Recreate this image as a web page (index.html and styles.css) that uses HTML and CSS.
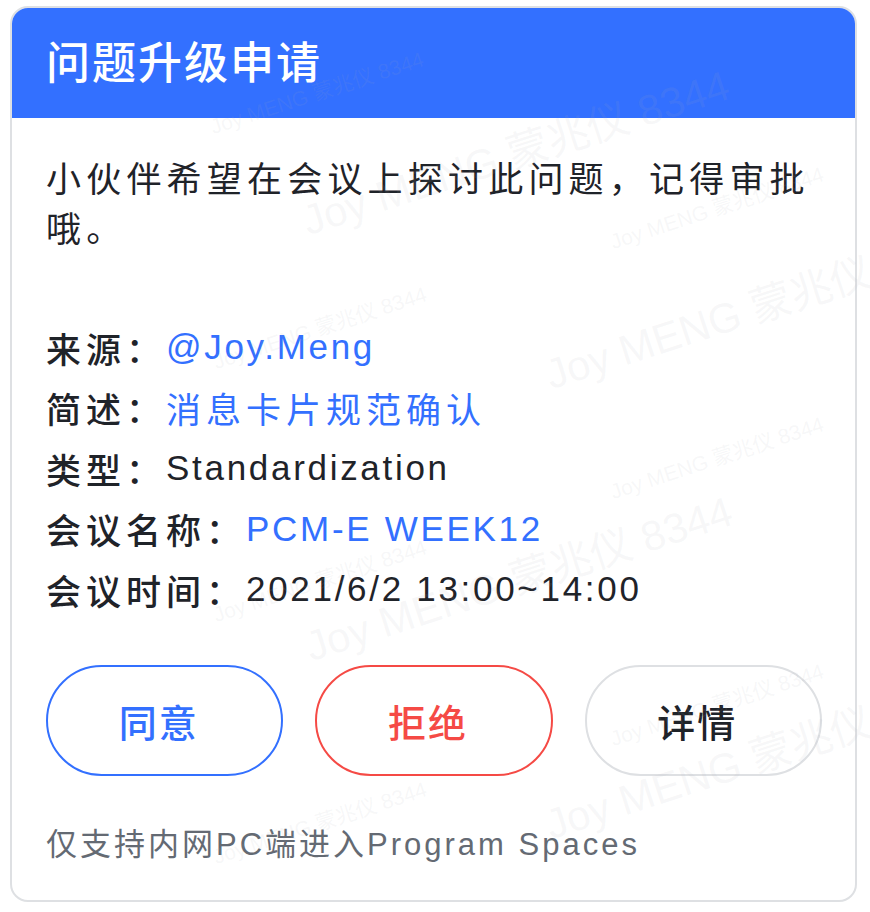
FILE: index.html
```html
<!DOCTYPE html>
<html lang="zh-CN">
<head>
<meta charset="utf-8">
<title>问题升级申请</title>
<link rel="stylesheet" href="styles.css">
</head>
<body>
<div class="card">
  <div class="header">
    <h1 class="title">问题升级申请</h1>
  </div>
  <div class="content">
    <p class="desc">小伙伴希望在会议上探讨此问题，记得审批哦。</p>
    <ul class="fields">
      <li class="field"><span class="label">来源：</span><span class="value link latin">@Joy.Meng</span></li>
      <li class="field"><span class="label">简述：</span><span class="value link">消息卡片规范确认</span></li>
      <li class="field"><span class="label">类型：</span><span class="value latin">Standardization</span></li>
      <li class="field"><span class="label">会议名称：</span><span class="value link latin">PCM-E WEEK12</span></li>
      <li class="field"><span class="label">会议时间：</span><span class="value latin">2021/6/2 13:00~14:00</span></li>
    </ul>
    <div class="actions">
      <button class="btn btn-agree">同意</button>
      <button class="btn btn-reject">拒绝</button>
      <button class="btn btn-detail">详情</button>
    </div>
    <p class="note">仅支持内网PC端进入Program Spaces</p>
  </div>
</div>
<div class="watermark">
  <span class="wm wm-big" style="left:312px;top:186px">Joy MENG 蒙兆仪 8344</span>
  <span class="wm wm-big" style="left:555px;top:340px">Joy MENG 蒙兆仪 8344</span>
  <span class="wm wm-big" style="left:315px;top:612px">Joy MENG 蒙兆仪 8344</span>
  <span class="wm wm-big" style="left:555px;top:790px">Joy MENG 蒙兆仪 8344</span>
  <span class="wm wm-small" style="left:215px;top:110px">Joy MENG 蒙兆仪 8344</span>
  <span class="wm wm-small" style="left:218px;top:345px">Joy MENG 蒙兆仪 8344</span>
  <span class="wm wm-small" style="left:218px;top:598px">Joy MENG 蒙兆仪 8344</span>
  <span class="wm wm-small" style="left:218px;top:840px">Joy MENG 蒙兆仪 8344</span>
  <span class="wm wm-small" style="left:615px;top:225px">Joy MENG 蒙兆仪 8344</span>
  <span class="wm wm-small" style="left:615px;top:475px">Joy MENG 蒙兆仪 8344</span>
  <span class="wm wm-small" style="left:615px;top:722px">Joy MENG 蒙兆仪 8344</span>
</div>
</body>
</html>
```

FILE: styles.css
```css
* {
  box-sizing: border-box;
}

html, body {
  margin: 0;
  padding: 0;
  background: #ffffff;
}

body {
  position: relative;
  width: 870px;
  height: 912px;
  overflow: hidden;
  font-family: "Liberation Sans", "Noto Sans CJK SC", sans-serif;
  color: #1f2329;
}

.card {
  margin: 6px 0 0 10px;
  width: 847px;
  border: 2px solid #dee0e3;
  border-radius: 18px;
  overflow: hidden;
  background: #ffffff;
}

.header {
  height: 110px;
  background: #3370ff;
  display: flex;
  align-items: center;
  padding: 0 34px 6px;
}

.title {
  margin: 0;
  font-family: "Noto Sans CJK SC", sans-serif;
  font-size: 44px;
  font-weight: 500;
  letter-spacing: 2px;
  color: #ffffff;
  line-height: 1;
}

.content {
  padding: 34px 33px 30px 34px;
}

.desc {
  margin: 0;
  font-family: "Noto Sans CJK SC", sans-serif;
  font-size: 35px;
  line-height: 50px;
  letter-spacing: 5.2px;
  color: #1f2329;
}

.fields {
  list-style: none;
  margin: 65px 0 0;
  padding: 0;
}

.field {
  display: flex;
  align-items: center;
  height: 60.5px;
  font-size: 35px;
  white-space: nowrap;
}

.label {
  font-family: "Noto Sans CJK SC", sans-serif;
  letter-spacing: 5px;
  color: #1f2329;
  font-weight: 500;
}

.value {
  font-family: "Noto Sans CJK SC", sans-serif;
  letter-spacing: 5px;
  color: #1f2329;
}

.value.latin {
  font-family: "Liberation Sans", "Noto Sans CJK SC", sans-serif;
  letter-spacing: 2.7px;
}

.value.link {
  color: #3370ff;
}

.actions {
  display: flex;
  gap: 32px;
  margin-top: 45px;
}

.btn {
  flex: 1;
  height: 111px;
  border-radius: 56px;
  border: 2px solid #dee0e3;
  background: #ffffff;
  font-family: "Noto Sans CJK SC", sans-serif;
  font-size: 38px;
  font-weight: 500;
  letter-spacing: 2px;
  padding: 0 12px 0 0;
  cursor: pointer;
}

.btn-agree {
  border-color: #3370ff;
  color: #3370ff;
}

.btn-reject {
  border-color: #f54a45;
  color: #f54a45;
}

.btn-detail {
  border-color: #dee0e3;
  color: #1f2329;
}

.note {
  margin: 44px 0 0;
  font-family: "Liberation Sans", "Noto Sans CJK SC", sans-serif;
  font-size: 31px;
  line-height: 50px;
  letter-spacing: 3px;
  color: #646a73;
}

.watermark {
  position: absolute;
  inset: 0;
  pointer-events: none;
  overflow: hidden;
}

.wm {
  position: absolute;
  white-space: nowrap;
  font-family: "Liberation Sans", "Noto Sans CJK SC", sans-serif;
  color: rgba(170, 175, 185, 0.1);
  transform: rotate(-18deg);
  transform-origin: left bottom;
}

.wm-big {
  font-size: 42px;
}

.wm-small {
  font-size: 21px;
}
```
